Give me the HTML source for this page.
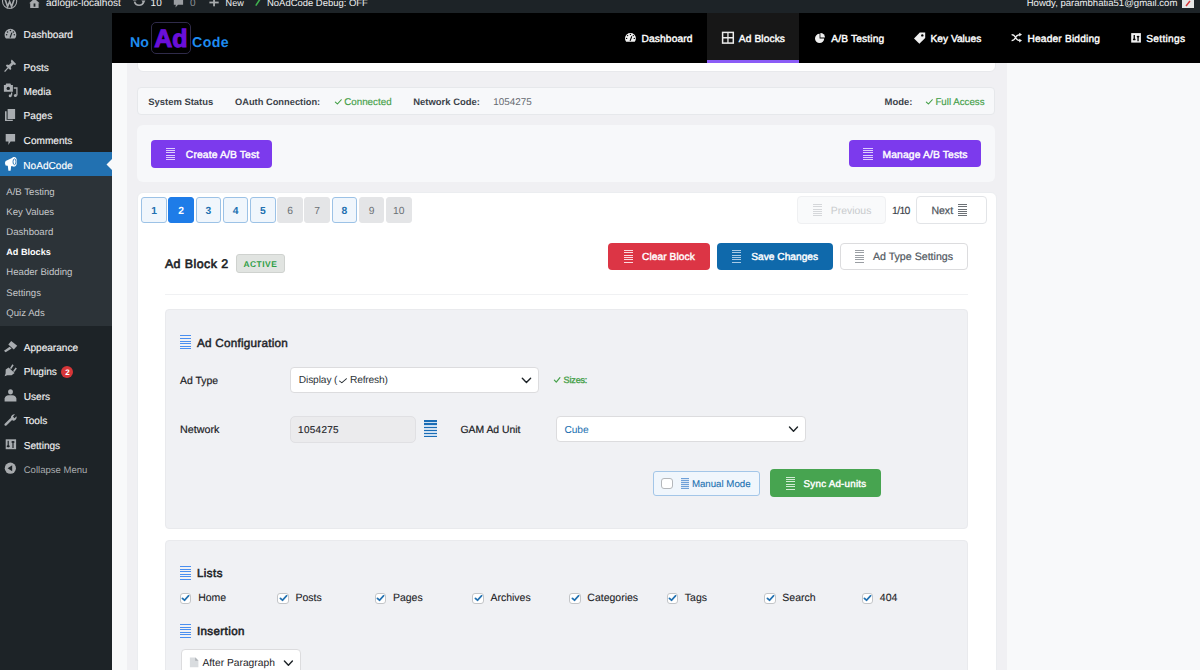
<!DOCTYPE html>
<html><head><meta charset="utf-8"><title>NoAdCode</title>
<style>
html,body{margin:0;padding:0;}
body{width:1200px;height:670px;overflow:hidden;position:relative;background:#f8f9fa;font-family:"Liberation Sans",sans-serif;}
.t{position:absolute;white-space:nowrap;line-height:1;text-rendering:geometricPrecision;}
.r{position:absolute;box-sizing:border-box;}
svg{position:absolute;overflow:visible;}
</style></head><body>

<div class="r" style="left:112.00px;top:63.00px;width:1088.00px;height:607.00px;background:#f8f9fa;"></div>
<div class="r" style="left:127.00px;top:63.00px;width:880.00px;height:607.00px;background:#f0f0f3;"></div>
<div class="r" style="left:0.00px;top:0.00px;width:1200.00px;height:13.00px;background:#1d2327;"></div>
<div class="t" style="left:46.00px;top:-1.20px;font-size:10.067px;color:#f0f0f1;">adlogic-localhost</div>
<div class="t" style="left:150.60px;top:-1.20px;font-size:10.06711409395973px;color:#f0f0f1;">10</div>
<div class="t" style="left:190.00px;top:-1.20px;font-size:10.06711409395973px;color:#8c8f94;">0</div>
<div class="t" style="left:225.60px;top:-1.20px;font-size:9.064px;color:#f0f0f1;">New</div>
<div class="t" style="left:267.00px;top:-1.21px;font-size:9.464px;color:#f0f0f1;">NoAdCode Debug: OFF</div>
<div class="t" style="left:1026.70px;top:-1.21px;font-size:9.555px;color:#f0f0f1;">Howdy, parambhatia51@gmail.com</div>
<div class="r" style="left:0.00px;top:13.00px;width:112.00px;height:657.00px;background:#1d2327;"></div>
<div class="t" style="left:23.60px;top:31.35px;font-size:10.1px;color:#f0f0f1;-webkit-text-stroke:0.15px #f0f0f1;">Dashboard</div>
<div class="t" style="left:23.60px;top:63.75px;font-size:10.1px;color:#f0f0f1;-webkit-text-stroke:0.15px #f0f0f1;">Posts</div>
<div class="t" style="left:23.60px;top:88.07px;font-size:10.1px;color:#f0f0f1;-webkit-text-stroke:0.15px #f0f0f1;">Media</div>
<div class="t" style="left:23.60px;top:112.35px;font-size:10.1px;color:#f0f0f1;-webkit-text-stroke:0.15px #f0f0f1;">Pages</div>
<div class="t" style="left:23.60px;top:136.65px;font-size:10.1px;color:#f0f0f1;-webkit-text-stroke:0.15px #f0f0f1;">Comments</div>
<div class="r" style="left:0.00px;top:152.20px;width:112.00px;height:23.60px;background:#2271b1;"></div>
<div class="t" style="left:23.30px;top:161.60px;font-size:10.1px;color:#fff;-webkit-text-stroke:0.15px #fff;">NoAdCode</div>
<div class="r" style="left:0.00px;top:175.80px;width:112.00px;height:149.80px;background:#2c3338;"></div>
<div class="t" style="left:6.30px;top:188.22px;font-size:9.6px;color:#c5c7ca;">A/B Testing</div>
<div class="t" style="left:6.30px;top:208.22px;font-size:9.6px;color:#c5c7ca;">Key Values</div>
<div class="t" style="left:6.30px;top:228.22px;font-size:9.6px;color:#c5c7ca;">Dashboard</div>
<div class="t" style="left:6.30px;top:248.30px;font-size:9.1px;color:#fff;font-weight:700;">Ad Blocks</div>
<div class="t" style="left:6.30px;top:268.40px;font-size:9.6px;color:#c5c7ca;">Header Bidding</div>
<div class="t" style="left:6.30px;top:288.50px;font-size:9.6px;color:#c5c7ca;">Settings</div>
<div class="t" style="left:6.30px;top:308.60px;font-size:9.6px;color:#c5c7ca;">Quiz Ads</div>
<div class="t" style="left:23.70px;top:343.75px;font-size:10.1px;color:#f0f0f1;-webkit-text-stroke:0.15px #f0f0f1;">Appearance</div>
<div class="t" style="left:23.70px;top:368.35px;font-size:10.1px;color:#f0f0f1;-webkit-text-stroke:0.15px #f0f0f1;">Plugins</div>
<div class="t" style="left:23.70px;top:393.07px;font-size:10.1px;color:#f0f0f1;-webkit-text-stroke:0.15px #f0f0f1;">Users</div>
<div class="t" style="left:23.70px;top:417.25px;font-size:10.1px;color:#f0f0f1;-webkit-text-stroke:0.15px #f0f0f1;">Tools</div>
<div class="t" style="left:23.70px;top:441.97px;font-size:10.1px;color:#f0f0f1;-webkit-text-stroke:0.15px #f0f0f1;">Settings</div>
<div class="t" style="left:23.70px;top:465.60px;font-size:9.55px;color:#a7aaad;">Collapse Menu</div>
<div class="r" style="left:61.3px;top:365.7px;width:12px;height:12px;border-radius:50%;background:#d63638;"></div>
<div class="t" style="left:65.20px;top:369.20px;font-size:8px;color:#fff;font-weight:700;">2</div>
<svg style="left:106px;top:158.5px" width="6" height="11"><path d="M6 0 L0.5 5.5 L6 11 Z" fill="#f8f9fa"/></svg>
<div class="r" style="left:137px;top:40px;width:859px;height:32px;background:#fff;border:1px solid #e8e9ec;border-radius:6px;"></div>
<div class="r" style="left:137.2px;top:87.1px;width:858.2px;height:28.1px;background:#f7f8fa;border:1px solid #e6e8eb;border-radius:4px;"></div>
<div class="t" style="left:148.30px;top:97.00px;font-size:9.431px;color:#3c434a;font-weight:700;">System Status</div>
<div class="t" style="left:235.00px;top:98.01px;font-size:9.318px;color:#3c434a;font-weight:700;">OAuth Connection:</div>
<svg style="left:334.50px;top:98.60px" width="6.70" height="5.80" viewBox="0 0 10 10" preserveAspectRatio="none"><path d="M0.6 5.4 L3.6 8.6 L9.4 1.2" fill="none" stroke="#45a049" stroke-width="1.79" stroke-linecap="round" stroke-linejoin="round"/></svg>
<div class="t" style="left:344.20px;top:98.00px;font-size:9.819px;color:#45a049;-webkit-text-stroke:0.15px #45a049;">Connected</div>
<div class="t" style="left:413.30px;top:98.00px;font-size:9.451px;color:#3c434a;font-weight:700;">Network Code:</div>
<div class="t" style="left:493.30px;top:98.00px;font-size:9.865px;color:#646970;">1054275</div>
<div class="t" style="left:884.60px;top:98.00px;font-size:9.474px;color:#3c434a;font-weight:700;">Mode:</div>
<svg style="left:925.50px;top:98.60px" width="6.70" height="5.80" viewBox="0 0 10 10" preserveAspectRatio="none"><path d="M0.6 5.4 L3.6 8.6 L9.4 1.2" fill="none" stroke="#45a049" stroke-width="1.79" stroke-linecap="round" stroke-linejoin="round"/></svg>
<div class="t" style="left:935.40px;top:98.00px;font-size:9.728px;color:#45a049;-webkit-text-stroke:0.15px #45a049;">Full Access</div>
<div class="r" style="left:137.2px;top:125.4px;width:858.2px;height:56.4px;background:#f7f8fa;border-radius:6px;"></div>
<div class="r" style="left:151.3px;top:140.3px;width:121.2px;height:27.4px;background:#7c3aed;border-radius:4px;"></div>
<div class="t" style="left:185.80px;top:150.60px;font-size:10.335px;color:#fff;-webkit-text-stroke:0.4px #fff;letter-spacing:0.127px;">Create A/B Test</div>
<div class="r" style="left:848.8px;top:140.4px;width:132.5px;height:27.1px;background:#7c3aed;border-radius:4px;"></div>
<div class="t" style="left:882.50px;top:150.60px;font-size:10.335px;color:#fff;-webkit-text-stroke:0.4px #fff;letter-spacing:0.125px;">Manage A/B Tests</div>
<div class="r" style="left:137px;top:192.3px;width:859.5px;height:600px;background:#fff;border:1px solid #ebedf0;border-radius:6px;"></div>
<div class="r" style="left:141.25px;top:197px;width:25.5px;height:25.5px;background:#f0f6fc;border:1px solid #9cc2e6;border-radius:3px;"></div>
<div class="t" style="left:151.13px;top:207.31px;font-size:10.3px;color:#2271b1;font-weight:700;">1</div>
<div class="r" style="left:168.45px;top:197px;width:25.5px;height:25.5px;background:#1e7ce8;border:1px solid #1e7ce8;border-radius:3px;"></div>
<div class="t" style="left:178.33px;top:207.31px;font-size:10.3px;color:#fff;font-weight:700;">2</div>
<div class="r" style="left:195.65px;top:197px;width:25.5px;height:25.5px;background:#f0f6fc;border:1px solid #9cc2e6;border-radius:3px;"></div>
<div class="t" style="left:205.53px;top:207.31px;font-size:10.3px;color:#2271b1;font-weight:700;">3</div>
<div class="r" style="left:222.85px;top:197px;width:25.5px;height:25.5px;background:#f0f6fc;border:1px solid #9cc2e6;border-radius:3px;"></div>
<div class="t" style="left:232.73px;top:207.31px;font-size:10.3px;color:#2271b1;font-weight:700;">4</div>
<div class="r" style="left:250.05px;top:197px;width:25.5px;height:25.5px;background:#f0f6fc;border:1px solid #9cc2e6;border-radius:3px;"></div>
<div class="t" style="left:259.94px;top:207.31px;font-size:10.3px;color:#2271b1;font-weight:700;">5</div>
<div class="r" style="left:277.25px;top:197px;width:25.5px;height:25.5px;background:#e4e5e7;border:1px solid #e4e5e7;border-radius:3px;"></div>
<div class="t" style="left:287.13px;top:207.31px;font-size:10.3px;color:#6b7075;">6</div>
<div class="r" style="left:304.45px;top:197px;width:25.5px;height:25.5px;background:#e4e5e7;border:1px solid #e4e5e7;border-radius:3px;"></div>
<div class="t" style="left:314.33px;top:207.31px;font-size:10.3px;color:#6b7075;">7</div>
<div class="r" style="left:331.65px;top:197px;width:25.5px;height:25.5px;background:#f0f6fc;border:1px solid #9cc2e6;border-radius:3px;"></div>
<div class="t" style="left:341.53px;top:207.31px;font-size:10.3px;color:#2271b1;font-weight:700;">8</div>
<div class="r" style="left:358.85px;top:197px;width:25.5px;height:25.5px;background:#e4e5e7;border:1px solid #e4e5e7;border-radius:3px;"></div>
<div class="t" style="left:368.74px;top:207.31px;font-size:10.3px;color:#6b7075;">9</div>
<div class="r" style="left:386.05px;top:197px;width:25.5px;height:25.5px;background:#e4e5e7;border:1px solid #e4e5e7;border-radius:3px;"></div>
<div class="t" style="left:393.07px;top:207.31px;font-size:10.3px;color:#6b7075;">10</div>
<div class="r" style="left:797.3px;top:196.1px;width:89.1px;height:27.6px;background:#f9fafb;border:1px solid #eff0f2;border-radius:4px;"></div>
<div class="t" style="left:830.80px;top:207.00px;font-size:10.437px;color:#c8cacd;">Previous</div>
<div class="t" style="left:892.00px;top:206.91px;font-size:10.475px;color:#3c434a;-webkit-text-stroke:0.15px #3c434a;letter-spacing:-0.667px;">1/10</div>
<div class="r" style="left:916.1px;top:196.1px;width:70.5px;height:27.6px;background:#fff;border:1px solid #e2e4e7;border-radius:4px;"></div>
<div class="t" style="left:931.40px;top:206.32px;font-size:10.560px;color:#50575e;-webkit-text-stroke:0.25px #50575e;">Next</div>
<div class="t" style="left:164.90px;top:258.21px;font-size:12.430px;color:#1d2327;-webkit-text-stroke:0.6px #1d2327;letter-spacing:0.432px;">Ad Block 2</div>
<div class="r" style="left:235.8px;top:253.8px;width:49.1px;height:19.5px;background:#e1e4e1;border:1px solid #cfd2cf;border-radius:3px;"></div>
<div class="t" style="left:243.50px;top:260.20px;font-size:8.398px;color:#2e9e45;font-weight:700;letter-spacing:0.500px;">ACTIVE</div>
<div class="r" style="left:608.1px;top:243px;width:101.8px;height:26.6px;background:#dc3545;border-radius:4px;"></div>
<div class="t" style="left:642.00px;top:253.10px;font-size:10.196px;color:#fff;-webkit-text-stroke:0.4px #fff;letter-spacing:0.075px;">Clear Block</div>
<div class="r" style="left:717.1px;top:243px;width:115.5px;height:26.6px;background:#0f69ab;border-radius:4px;"></div>
<div class="t" style="left:751.30px;top:253.10px;font-size:10.196px;color:#fff;-webkit-text-stroke:0.4px #fff;">Save Changes</div>
<div class="r" style="left:839.7px;top:243px;width:128.5px;height:26.6px;background:#fff;border:1px solid #dcdcde;border-radius:4px;"></div>
<div class="t" style="left:872.90px;top:252.01px;font-size:10.646px;color:#50575e;-webkit-text-stroke:0.2px #50575e;">Ad Type Settings</div>
<div class="r" style="left:165.00px;top:294.20px;width:803.20px;height:1.30px;background:#f0f1f3;"></div>
<div class="r" style="left:165px;top:309.4px;width:803.2px;height:220px;background:#f0f1f4;border:1px solid #e9eaed;border-radius:4px;"></div>
<div class="t" style="left:196.90px;top:337.51px;font-size:11.732px;color:#1d2327;-webkit-text-stroke:0.45px #1d2327;letter-spacing:0.247px;">Ad Configuration</div>
<div class="t" style="left:180.10px;top:376.51px;font-size:10.411px;color:#1d2327;-webkit-text-stroke:0.2px #1d2327;">Ad Type</div>
<div class="r" style="left:289.5px;top:366.7px;width:249.7px;height:26.3px;background:#fff;border:1px solid #dcdcde;border-radius:4px;"></div>
<div class="t" style="left:298.75px;top:376.41px;font-size:10.196px;color:#2c3338;letter-spacing:-0.114px;">Display (</div>
<svg style="left:339.20px;top:378.00px" width="7.90" height="5.60" viewBox="0 0 10 10" preserveAspectRatio="none"><path d="M0.6 5.4 L3.6 8.6 L9.4 1.2" fill="none" stroke="#2c3338" stroke-width="1.39" stroke-linecap="round" stroke-linejoin="round"/></svg>
<div class="t" style="left:350.00px;top:376.41px;font-size:10.196px;color:#2c3338;letter-spacing:-0.171px;">Refresh)</div>
<svg style="left:553.80px;top:376.90px" width="6.30" height="5.90" viewBox="0 0 10 10" preserveAspectRatio="none"><path d="M0.6 5.4 L3.6 8.6 L9.4 1.2" fill="none" stroke="#45a049" stroke-width="1.90" stroke-linecap="round" stroke-linejoin="round"/></svg>
<div class="t" style="left:563.60px;top:375.90px;font-size:9.078px;color:#45a049;-webkit-text-stroke:0.35px #45a049;letter-spacing:-0.183px;">Sizes:</div>
<div class="t" style="left:180.00px;top:425.20px;font-size:10.736px;color:#1d2327;-webkit-text-stroke:0.2px #1d2327;">Network</div>
<div class="r" style="left:289.5px;top:415.5px;width:126.7px;height:27px;background:#ebebed;border:1px solid #e0e0e3;border-radius:5px;"></div>
<div class="t" style="left:298.10px;top:426.41px;font-size:9.916px;color:#1d2327;-webkit-text-stroke:0.15px #1d2327;letter-spacing:0.317px;">1054275</div>
<div class="t" style="left:460.50px;top:426.22px;font-size:10.381px;color:#1d2327;-webkit-text-stroke:0.2px #1d2327;">GAM Ad Unit</div>
<div class="r" style="left:555.7px;top:415.7px;width:250.5px;height:26.7px;background:#fff;border:1px solid #dcdcde;border-radius:4px;"></div>
<div class="t" style="left:564.40px;top:426.41px;font-size:10.196px;color:#2271b1;letter-spacing:-0.022px;">Cube</div>
<div class="r" style="left:652.5px;top:470.5px;width:107.2px;height:25.5px;background:#f0f6fc;border:1px solid #a3c6e8;border-radius:3px;"></div>
<div class="r" style="left:661.1px;top:478px;width:12px;height:11px;background:#fff;border:1px solid #b4b7bb;border-radius:3px;"></div>
<div class="t" style="left:691.90px;top:480.31px;font-size:9.703px;color:#2271b1;-webkit-text-stroke:0.1px #2271b1;">Manual Mode</div>
<div class="r" style="left:770.2px;top:469.4px;width:111px;height:27.3px;background:#47a450;border-radius:4px;"></div>
<div class="t" style="left:803.60px;top:480.31px;font-size:9.777px;color:#fff;-webkit-text-stroke:0.4px #fff;letter-spacing:0.235px;">Sync Ad-units</div>
<div class="r" style="left:165px;top:540.1px;width:803.2px;height:200px;background:#f0f1f4;border:1px solid #e9eaed;border-radius:4px;"></div>
<div class="t" style="left:196.90px;top:569.00px;font-size:11.453px;color:#1d2327;-webkit-text-stroke:0.55px #1d2327;letter-spacing:0.491px;">Lists</div>
<div class="r" style="left:179.75px;top:593px;width:11.5px;height:11.25px;background:#fff;border:1px solid #c3c5c8;border-radius:3px;"></div>
<svg style="left:182.05px;top:595.30px" width="7.00" height="6.20" viewBox="0 0 10 10" preserveAspectRatio="none"><path d="M0.6 5.4 L3.6 8.6 L9.4 1.2" fill="none" stroke="#2271b1" stroke-width="2.57" stroke-linecap="round" stroke-linejoin="round"/></svg>
<div class="t" style="left:198.20px;top:593.41px;font-size:10.5px;color:#1d2327;-webkit-text-stroke:0.1px #1d2327;">Home</div>
<div class="r" style="left:277.25px;top:593px;width:11.5px;height:11.25px;background:#fff;border:1px solid #c3c5c8;border-radius:3px;"></div>
<svg style="left:279.55px;top:595.30px" width="7.00" height="6.20" viewBox="0 0 10 10" preserveAspectRatio="none"><path d="M0.6 5.4 L3.6 8.6 L9.4 1.2" fill="none" stroke="#2271b1" stroke-width="2.57" stroke-linecap="round" stroke-linejoin="round"/></svg>
<div class="t" style="left:295.40px;top:593.41px;font-size:10.5px;color:#1d2327;-webkit-text-stroke:0.1px #1d2327;">Posts</div>
<div class="r" style="left:374.75px;top:593px;width:11.5px;height:11.25px;background:#fff;border:1px solid #c3c5c8;border-radius:3px;"></div>
<svg style="left:377.05px;top:595.30px" width="7.00" height="6.20" viewBox="0 0 10 10" preserveAspectRatio="none"><path d="M0.6 5.4 L3.6 8.6 L9.4 1.2" fill="none" stroke="#2271b1" stroke-width="2.57" stroke-linecap="round" stroke-linejoin="round"/></svg>
<div class="t" style="left:392.90px;top:593.41px;font-size:10.5px;color:#1d2327;-webkit-text-stroke:0.1px #1d2327;">Pages</div>
<div class="r" style="left:472.25px;top:593px;width:11.5px;height:11.25px;background:#fff;border:1px solid #c3c5c8;border-radius:3px;"></div>
<svg style="left:474.55px;top:595.30px" width="7.00" height="6.20" viewBox="0 0 10 10" preserveAspectRatio="none"><path d="M0.6 5.4 L3.6 8.6 L9.4 1.2" fill="none" stroke="#2271b1" stroke-width="2.57" stroke-linecap="round" stroke-linejoin="round"/></svg>
<div class="t" style="left:490.40px;top:593.41px;font-size:10.5px;color:#1d2327;-webkit-text-stroke:0.1px #1d2327;">Archives</div>
<div class="r" style="left:569.40px;top:593px;width:11.5px;height:11.25px;background:#fff;border:1px solid #c3c5c8;border-radius:3px;"></div>
<svg style="left:571.70px;top:595.30px" width="7.00" height="6.20" viewBox="0 0 10 10" preserveAspectRatio="none"><path d="M0.6 5.4 L3.6 8.6 L9.4 1.2" fill="none" stroke="#2271b1" stroke-width="2.57" stroke-linecap="round" stroke-linejoin="round"/></svg>
<div class="t" style="left:587.30px;top:593.41px;font-size:10.5px;color:#1d2327;-webkit-text-stroke:0.1px #1d2327;">Categories</div>
<div class="r" style="left:666.90px;top:593px;width:11.5px;height:11.25px;background:#fff;border:1px solid #c3c5c8;border-radius:3px;"></div>
<svg style="left:669.20px;top:595.30px" width="7.00" height="6.20" viewBox="0 0 10 10" preserveAspectRatio="none"><path d="M0.6 5.4 L3.6 8.6 L9.4 1.2" fill="none" stroke="#2271b1" stroke-width="2.57" stroke-linecap="round" stroke-linejoin="round"/></svg>
<div class="t" style="left:684.80px;top:593.41px;font-size:10.5px;color:#1d2327;-webkit-text-stroke:0.1px #1d2327;">Tags</div>
<div class="r" style="left:764.40px;top:593px;width:11.5px;height:11.25px;background:#fff;border:1px solid #c3c5c8;border-radius:3px;"></div>
<svg style="left:766.70px;top:595.30px" width="7.00" height="6.20" viewBox="0 0 10 10" preserveAspectRatio="none"><path d="M0.6 5.4 L3.6 8.6 L9.4 1.2" fill="none" stroke="#2271b1" stroke-width="2.57" stroke-linecap="round" stroke-linejoin="round"/></svg>
<div class="t" style="left:782.30px;top:593.41px;font-size:10.5px;color:#1d2327;-webkit-text-stroke:0.1px #1d2327;">Search</div>
<div class="r" style="left:861.90px;top:593px;width:11.5px;height:11.25px;background:#fff;border:1px solid #c3c5c8;border-radius:3px;"></div>
<svg style="left:864.20px;top:595.30px" width="7.00" height="6.20" viewBox="0 0 10 10" preserveAspectRatio="none"><path d="M0.6 5.4 L3.6 8.6 L9.4 1.2" fill="none" stroke="#2271b1" stroke-width="2.57" stroke-linecap="round" stroke-linejoin="round"/></svg>
<div class="t" style="left:879.80px;top:593.41px;font-size:10.5px;color:#1d2327;-webkit-text-stroke:0.1px #1d2327;">404</div>
<div class="t" style="left:196.90px;top:626.90px;font-size:11.592px;color:#1d2327;-webkit-text-stroke:0.55px #1d2327;letter-spacing:0.393px;">Insertion</div>
<div class="r" style="left:180.7px;top:648.9px;width:120.4px;height:40px;background:#fff;border:1px solid #dcdcde;border-radius:4px;"></div>
<div class="t" style="left:202.40px;top:658.82px;font-size:10.283px;color:#1d2327;">After Paragraph</div>
<div class="r" style="left:166.00px;top:148.00px;width:9.00px;height:1.0px;background:rgba(240,232,255,0.85);"></div>
<div class="r" style="left:166.00px;top:150.24px;width:9.00px;height:1.0px;background:rgba(240,232,255,0.85);"></div>
<div class="r" style="left:166.00px;top:152.48px;width:9.00px;height:1.0px;background:rgba(240,232,255,0.85);"></div>
<div class="r" style="left:166.00px;top:154.72px;width:9.00px;height:1.0px;background:rgba(240,232,255,0.85);"></div>
<div class="r" style="left:166.00px;top:156.96px;width:9.00px;height:1.0px;background:rgba(240,232,255,0.85);"></div>
<div class="r" style="left:166.00px;top:159.20px;width:9.00px;height:1.0px;background:rgba(240,232,255,0.85);"></div>
<div class="r" style="left:862.50px;top:148.00px;width:10.50px;height:1.0px;background:rgba(240,232,255,0.85);"></div>
<div class="r" style="left:862.50px;top:150.24px;width:10.50px;height:1.0px;background:rgba(240,232,255,0.85);"></div>
<div class="r" style="left:862.50px;top:152.48px;width:10.50px;height:1.0px;background:rgba(240,232,255,0.85);"></div>
<div class="r" style="left:862.50px;top:154.72px;width:10.50px;height:1.0px;background:rgba(240,232,255,0.85);"></div>
<div class="r" style="left:862.50px;top:156.96px;width:10.50px;height:1.0px;background:rgba(240,232,255,0.85);"></div>
<div class="r" style="left:862.50px;top:159.20px;width:10.50px;height:1.0px;background:rgba(240,232,255,0.85);"></div>
<div class="r" style="left:812.60px;top:204.00px;width:9.60px;height:1.0px;background:#d5d7da;"></div>
<div class="r" style="left:812.60px;top:206.28px;width:9.60px;height:1.0px;background:#d5d7da;"></div>
<div class="r" style="left:812.60px;top:208.56px;width:9.60px;height:1.0px;background:#d5d7da;"></div>
<div class="r" style="left:812.60px;top:210.84px;width:9.60px;height:1.0px;background:#d5d7da;"></div>
<div class="r" style="left:812.60px;top:213.12px;width:9.60px;height:1.0px;background:#d5d7da;"></div>
<div class="r" style="left:812.60px;top:215.40px;width:9.60px;height:1.0px;background:#d5d7da;"></div>
<div class="r" style="left:957.90px;top:204.00px;width:9.40px;height:1.0px;background:#6b7075;"></div>
<div class="r" style="left:957.90px;top:206.28px;width:9.40px;height:1.0px;background:#6b7075;"></div>
<div class="r" style="left:957.90px;top:208.56px;width:9.40px;height:1.0px;background:#6b7075;"></div>
<div class="r" style="left:957.90px;top:210.84px;width:9.40px;height:1.0px;background:#6b7075;"></div>
<div class="r" style="left:957.90px;top:213.12px;width:9.40px;height:1.0px;background:#6b7075;"></div>
<div class="r" style="left:957.90px;top:215.40px;width:9.40px;height:1.0px;background:#6b7075;"></div>
<div class="r" style="left:623.70px;top:250.00px;width:9.00px;height:1.0px;background:rgba(255,235,238,0.9);"></div>
<div class="r" style="left:623.70px;top:252.34px;width:9.00px;height:1.0px;background:rgba(255,235,238,0.9);"></div>
<div class="r" style="left:623.70px;top:254.68px;width:9.00px;height:1.0px;background:rgba(255,235,238,0.9);"></div>
<div class="r" style="left:623.70px;top:257.02px;width:9.00px;height:1.0px;background:rgba(255,235,238,0.9);"></div>
<div class="r" style="left:623.70px;top:259.36px;width:9.00px;height:1.0px;background:rgba(255,235,238,0.9);"></div>
<div class="r" style="left:623.70px;top:261.70px;width:9.00px;height:1.0px;background:rgba(255,235,238,0.9);"></div>
<div class="r" style="left:731.80px;top:250.00px;width:9.50px;height:1.0px;background:rgba(220,235,250,0.75);"></div>
<div class="r" style="left:731.80px;top:252.34px;width:9.50px;height:1.0px;background:rgba(220,235,250,0.75);"></div>
<div class="r" style="left:731.80px;top:254.68px;width:9.50px;height:1.0px;background:rgba(220,235,250,0.75);"></div>
<div class="r" style="left:731.80px;top:257.02px;width:9.50px;height:1.0px;background:rgba(220,235,250,0.75);"></div>
<div class="r" style="left:731.80px;top:259.36px;width:9.50px;height:1.0px;background:rgba(220,235,250,0.75);"></div>
<div class="r" style="left:731.80px;top:261.70px;width:9.50px;height:1.0px;background:rgba(220,235,250,0.75);"></div>
<div class="r" style="left:854.80px;top:250.00px;width:9.50px;height:1.0px;background:#9a9ea3;"></div>
<div class="r" style="left:854.80px;top:252.34px;width:9.50px;height:1.0px;background:#9a9ea3;"></div>
<div class="r" style="left:854.80px;top:254.68px;width:9.50px;height:1.0px;background:#9a9ea3;"></div>
<div class="r" style="left:854.80px;top:257.02px;width:9.50px;height:1.0px;background:#9a9ea3;"></div>
<div class="r" style="left:854.80px;top:259.36px;width:9.50px;height:1.0px;background:#9a9ea3;"></div>
<div class="r" style="left:854.80px;top:261.70px;width:9.50px;height:1.0px;background:#9a9ea3;"></div>
<div class="r" style="left:180.00px;top:335.40px;width:10.50px;height:1.1px;background:#4a8ff0;"></div>
<div class="r" style="left:180.00px;top:337.96px;width:10.50px;height:1.1px;background:#4a8ff0;"></div>
<div class="r" style="left:180.00px;top:340.52px;width:10.50px;height:1.1px;background:#4a8ff0;"></div>
<div class="r" style="left:180.00px;top:343.08px;width:10.50px;height:1.1px;background:#4a8ff0;"></div>
<div class="r" style="left:180.00px;top:345.64px;width:10.50px;height:1.1px;background:#4a8ff0;"></div>
<div class="r" style="left:180.00px;top:348.20px;width:10.50px;height:1.1px;background:#4a8ff0;"></div>
<div class="r" style="left:423.90px;top:420.40px;width:13.30px;height:16.90px;background:#cfe0f1;"></div>
<div class="r" style="left:423.90px;top:420.40px;width:13.30px;height:1.6px;background:#1a6db5;"></div>
<div class="r" style="left:423.90px;top:423.46px;width:13.30px;height:1.6px;background:#1a6db5;"></div>
<div class="r" style="left:423.90px;top:426.52px;width:13.30px;height:1.6px;background:#1a6db5;"></div>
<div class="r" style="left:423.90px;top:429.58px;width:13.30px;height:1.6px;background:#1a6db5;"></div>
<div class="r" style="left:423.90px;top:432.64px;width:13.30px;height:1.6px;background:#1a6db5;"></div>
<div class="r" style="left:423.90px;top:435.70px;width:13.30px;height:1.6px;background:#1a6db5;"></div>
<div class="r" style="left:680.60px;top:477.60px;width:8.30px;height:11.60px;background:#dbe7f5;"></div>
<div class="r" style="left:680.60px;top:477.60px;width:8.30px;height:1.0px;background:#6fa0d8;"></div>
<div class="r" style="left:680.60px;top:479.72px;width:8.30px;height:1.0px;background:#6fa0d8;"></div>
<div class="r" style="left:680.60px;top:481.84px;width:8.30px;height:1.0px;background:#6fa0d8;"></div>
<div class="r" style="left:680.60px;top:483.96px;width:8.30px;height:1.0px;background:#6fa0d8;"></div>
<div class="r" style="left:680.60px;top:486.08px;width:8.30px;height:1.0px;background:#6fa0d8;"></div>
<div class="r" style="left:680.60px;top:488.20px;width:8.30px;height:1.0px;background:#6fa0d8;"></div>
<div class="r" style="left:785.60px;top:476.50px;width:9.40px;height:1.0px;background:rgba(235,250,235,0.85);"></div>
<div class="r" style="left:785.60px;top:478.90px;width:9.40px;height:1.0px;background:rgba(235,250,235,0.85);"></div>
<div class="r" style="left:785.60px;top:481.30px;width:9.40px;height:1.0px;background:rgba(235,250,235,0.85);"></div>
<div class="r" style="left:785.60px;top:483.70px;width:9.40px;height:1.0px;background:rgba(235,250,235,0.85);"></div>
<div class="r" style="left:785.60px;top:486.10px;width:9.40px;height:1.0px;background:rgba(235,250,235,0.85);"></div>
<div class="r" style="left:785.60px;top:488.50px;width:9.40px;height:1.0px;background:rgba(235,250,235,0.85);"></div>
<div class="r" style="left:180.00px;top:566.00px;width:10.50px;height:1.1px;background:#4a8ff0;"></div>
<div class="r" style="left:180.00px;top:568.50px;width:10.50px;height:1.1px;background:#4a8ff0;"></div>
<div class="r" style="left:180.00px;top:571.00px;width:10.50px;height:1.1px;background:#4a8ff0;"></div>
<div class="r" style="left:180.00px;top:573.50px;width:10.50px;height:1.1px;background:#4a8ff0;"></div>
<div class="r" style="left:180.00px;top:576.00px;width:10.50px;height:1.1px;background:#4a8ff0;"></div>
<div class="r" style="left:180.00px;top:578.50px;width:10.50px;height:1.1px;background:#4a8ff0;"></div>
<div class="r" style="left:180.00px;top:624.20px;width:10.50px;height:1.1px;background:#4a8ff0;"></div>
<div class="r" style="left:180.00px;top:626.70px;width:10.50px;height:1.1px;background:#4a8ff0;"></div>
<div class="r" style="left:180.00px;top:629.20px;width:10.50px;height:1.1px;background:#4a8ff0;"></div>
<div class="r" style="left:180.00px;top:631.70px;width:10.50px;height:1.1px;background:#4a8ff0;"></div>
<div class="r" style="left:180.00px;top:634.20px;width:10.50px;height:1.1px;background:#4a8ff0;"></div>
<div class="r" style="left:180.00px;top:636.70px;width:10.50px;height:1.1px;background:#4a8ff0;"></div>
<svg style="left:0;top:0" width="1200" height="670"><path d="M522.3 378.2 L526.45 382.4 L530.6 378.2" fill="none" stroke="#1d2327" stroke-width="1.4" stroke-linecap="round" stroke-linejoin="round"/></svg>
<svg style="left:0;top:0" width="1200" height="670"><path d="M789.5 427.0 L793.5 431.2 L797.5 427.0" fill="none" stroke="#1d2327" stroke-width="1.4" stroke-linecap="round" stroke-linejoin="round"/></svg>
<svg style="left:0;top:0" width="1200" height="670"><path d="M284.4 660.9 L288.4 665.2 L292.4 660.9" fill="none" stroke="#1d2327" stroke-width="1.4" stroke-linecap="round" stroke-linejoin="round"/></svg>
<svg style="left:0;top:0" width="1200" height="670"><path d="M189.9 657.5 L195.6 657.5 L198.4 660.3 L198.4 667.2 L189.9 667.2 Z" fill="#d9dcdf"/><path d="M195.2 657.5 L195.2 660.7 L198.4 660.7" fill="#aeb2b6"/></svg>
<div class="r" style="left:112.00px;top:13.00px;width:1088.00px;height:50.00px;background:#000;"></div>
<div class="t" style="left:130.00px;top:36.00px;font-size:14.2px;color:#1e8cf0;font-weight:700;">No</div>
<div class="r" style="left:151px;top:22px;width:40px;height:32px;border:1px solid #2f2b4a;border-radius:5px;"></div>
<div class="t" style="left:154.30px;top:27.31px;font-size:25.0px;color:#6a0fd9;font-weight:700;letter-spacing:0px;-webkit-text-stroke:1.1px #6a0fd9;">Ad</div>
<div class="t" style="left:192.00px;top:36.00px;font-size:14.2px;color:#1e8cf0;font-weight:700;letter-spacing:0.4px;">Code</div>
<div class="r" style="left:707.00px;top:13.00px;width:92.30px;height:50.00px;background:#171717;"></div>
<div class="r" style="left:707.00px;top:60.30px;width:92.30px;height:2.70px;background:#8b5cf6;"></div>
<div class="t" style="left:641.50px;top:34.81px;font-size:10.196px;color:#fff;-webkit-text-stroke:0.4px #fff;letter-spacing:0.140px;">Dashboard</div>
<div class="t" style="left:738.80px;top:34.81px;font-size:10.196px;color:#fff;-webkit-text-stroke:0.4px #fff;letter-spacing:0.107px;">Ad Blocks</div>
<div class="t" style="left:831.30px;top:34.81px;font-size:10.196px;color:#fff;-webkit-text-stroke:0.4px #fff;letter-spacing:0.161px;">A/B Testing</div>
<div class="t" style="left:930.50px;top:34.81px;font-size:10.196px;color:#fff;-webkit-text-stroke:0.4px #fff;">Key Values</div>
<div class="t" style="left:1027.50px;top:34.81px;font-size:10.196px;color:#fff;-webkit-text-stroke:0.4px #fff;letter-spacing:0.169px;">Header Bidding</div>
<div class="t" style="left:1146.30px;top:34.81px;font-size:10.196px;color:#fff;-webkit-text-stroke:0.4px #fff;letter-spacing:0.267px;">Settings</div>
<svg style="left:0;top:0" width="1200" height="670" viewBox="0 0 1200 670">
<g fill="#a7aaad">
 <!-- admin bar WP logo -->
 <circle cx="9.6" cy="1.3" r="7.1" fill="none" stroke="#a7aaad" stroke-width="1.1"/>
 <path d="M4.8 -1.5 L7.6 6.6 L9.6 1.5 L11.6 6.6 L14.4 -1.5" fill="none" stroke="#a7aaad" stroke-width="1.6"/>
 <!-- home -->
 <path d="M29.2 3.2 L34.4 -1.5 L39.6 3.2 L38.6 3.2 L38.6 7.9 L30.2 7.9 L30.2 3.2 Z"/>
 <rect x="33.6" y="3.5" width="1.8" height="3.2" fill="#1d2327"/>
 <!-- updates -->
 <path d="M134.6 1.6 A4.6 4.6 0 0 0 143.6 1.6" fill="none" stroke="#a7aaad" stroke-width="1.7"/>
 <path d="M141.4 0.6 L145.4 0.6 L143.6 3.8 Z"/>
 <path d="M132.8 0.6 L136.6 0.6 L134.7 -2.4 Z"/>
 <!-- comments -->
 <path d="M173.8 -1 L183.1 -1 L183.1 4.8 L178 4.8 L175.5 7.5 L175.8 4.8 L173.8 4.8 Z" fill="#9a9da1"/>
 <!-- plus -->
 <rect x="209.4" y="1.6" width="9.3" height="1.8"/>
 <rect x="213.15" y="-2" width="1.8" height="8.3"/>
 <!-- pencil -->
 <path d="M255.8 5.6 L259.8 -0.5" stroke="#3fb24f" stroke-width="1.6"/>
 <!-- avatar -->
 <rect x="1182" y="-2" width="12" height="10" fill="#e6e6e6"/>
 <path d="M1186 6 L1190 1" stroke="#d63638" stroke-width="1.5"/>
</g>
<g fill="#a9adb1">
 <!-- sidebar dashboard gauge -->
 <path d="M6.0 38.6 A5.9 5.9 0 1 1 14.9 38.6 Z"/>
 <g fill="#1d2327"><circle cx="10.45" cy="30.6" r="0.75"/><circle cx="7.5" cy="31.9" r="0.75"/><circle cx="13.4" cy="31.9" r="0.75"/><circle cx="6.6" cy="34.8" r="0.75"/><circle cx="14.3" cy="34.8" r="0.75"/></g>
 <path d="M10.1 37.6 L11.9 32.6" stroke="#1d2327" stroke-width="1.2"/>
 <!-- pin -->
 <path d="M11.8 59.6 L16.1 63.9 L15.0 65.0 L13.2 64.6 L10.8 67.0 L11.3 69.0 L10.2 70.1 L5.8 65.7 L6.9 64.6 L8.9 65.1 L11.3 62.7 L10.9 60.9 Z"/>
 <path d="M8.2 67.6 L4.6 71.6" stroke="#a9adb1" stroke-width="1.3"/>
 <!-- media -->
 <path d="M3.9 85.0 L5.6 85.0 L6.2 83.6 L10.4 83.6 L11.0 85.0 L12.9 85.0 L12.9 91.8 L3.9 91.8 Z"/>
 <circle cx="8.3" cy="88.4" r="1.7" fill="#1d2327"/>
 <path d="M13.8 88.0 L16.9 88.0 L16.9 95.6" fill="none" stroke="#a9adb1" stroke-width="1.3"/>
 <path d="M11.6 92.6 L11.6 95.6" fill="none" stroke="#a9adb1" stroke-width="1.2"/>
 <circle cx="15.4" cy="95.6" r="1.5"/><circle cx="10.2" cy="95.8" r="1.5"/>
 <!-- pages -->
 <path d="M5.0 111.2 L6.6 111.2 L6.6 119.8 L12.8 119.8 L12.8 120.9 L5.0 120.9 Z"/>
 <rect x="7.6" y="109.0" width="7.5" height="10.0"/>
 <!-- comments -->
 <path d="M5.7 134.0 L15.1 134.0 L15.1 141.4 L10.6 141.4 L8.3 145.1 L8.5 141.4 L5.7 141.4 Z"/>
 <!-- appearance brush -->
 <path d="M11.2 341.0 L17.2 345.8 L13.8 349.6 L8.3 344.6 Z"/>
 <path d="M9.6 346.8 L11.6 348.6 L5.6 352.2 L4.0 350.8 Z"/>
 <!-- plugins -->
 <path d="M8.6 367.6 L14.6 373.0 L11.6 375.2 L7.2 375.2 L4.6 376.3 L5.6 373.6 L5.7 369.4 Z"/>
 <path d="M10.6 368.6 L13.0 364.8" stroke="#a9adb1" stroke-width="1.6"/>
 <path d="M13.6 371.6 L16.2 368.0" stroke="#a9adb1" stroke-width="1.6"/>
 <!-- users -->
 <ellipse cx="10.5" cy="391.8" rx="2.4" ry="2.6"/>
 <path d="M4.6 401.4 L4.6 398.6 Q5.2 395.4 8.6 395.2 L12.4 395.2 Q15.8 395.4 16.4 398.6 L16.4 401.4 Z"/>
 <!-- tools wrench -->
 <path d="M5.6 424.6 L11.2 419.2" stroke="#a9adb1" stroke-width="2.4" stroke-linecap="round"/>
 <path d="M10.8 417.6 A3.6 3.6 0 0 1 15.0 414.3 L13.0 416.6 L14.4 418.2 L16.6 416.2 A3.6 3.6 0 0 1 12.6 420.6 Z"/>
 <!-- settings -->
 <rect x="5.7" y="439.3" width="10.4" height="9.9"/>
 <g fill="#1d2327"><rect x="7.6" y="440.8" width="1.2" height="6.4"/><ellipse cx="8.2" cy="446.2" rx="1.6" ry="1.0"/><rect x="12.4" y="442.4" width="1.2" height="5.6"/><ellipse cx="13.0" cy="441.9" rx="1.6" ry="1.0"/></g>
 <!-- collapse -->
 <circle cx="10.35" cy="468.2" r="5.6" fill="#a7aaad"/>
 <path d="M7.6 468.2 L12.2 465.2 L12.2 471.2 Z" fill="#1d2327"/>
</g>
<!-- megaphone -->
<g fill="#fff">
 <path d="M5.6 161.0 L13.6 157.3 L14.4 166.4 L5.6 165.4 Q4.0 163.2 5.6 161.0 Z"/>
 <path d="M7.6 164.6 L11.2 165.4 L10.6 170.7 L8.4 170.7 Z"/>
 <ellipse cx="14.2" cy="161.8" rx="2.7" ry="4.8"/>
 <ellipse cx="14.5" cy="161.8" rx="1.5" ry="2.9" fill="#fff" stroke="#2271b1" stroke-width="0.9"/>
</g>
<!-- header nav icons -->
<g fill="#f0f0f0">
 <path d="M626.15 41.8 A5.45 5.45 0 1 1 634.75 41.8 Z"/>
 <g fill="#000"><circle cx="630.45" cy="34.4" r="0.7"/><circle cx="627.6" cy="35.6" r="0.7"/><circle cx="633.3" cy="35.6" r="0.7"/><circle cx="626.6" cy="38.4" r="0.7"/><circle cx="634.3" cy="38.4" r="0.7"/></g>
 <path d="M630.1 40.9 L631.8 36.2" stroke="#000" stroke-width="1.1"/>
 <rect x="722.6" y="32.4" width="10.7" height="10.7" fill="none" stroke="#ececec" stroke-width="1.5"/>
 <path d="M727.95 32.4 L727.95 43.1 M722.6 37.75 L733.3 37.75" stroke="#ececec" stroke-width="1.3"/>
 <path d="M819.6 38.4 L819.6 33.8 A4.6 4.6 0 1 0 824.2 38.4 Z"/>
 <path d="M820.4 37.6 L820.4 33.0 A4.6 4.6 0 0 1 825.0 37.6 Z"/>
 <path d="M914.0 38.4 L919.8 32.6 L925.2 32.5 L925.2 37.9 L919.4 43.8 Z"/>
 <circle cx="922.3" cy="35.4" r="1.2" fill="#000"/>
 <path d="M1011.6 34.6 Q1014.2 34.6 1015.6 37.6 Q1017.0 40.6 1019.8 40.6 M1011.6 40.6 Q1014.2 40.6 1015.6 37.6 Q1017.0 34.6 1019.8 34.6" fill="none" stroke="#f0f0f0" stroke-width="1.3"/>
 <path d="M1019.2 32.8 L1022.0 34.6 L1019.2 36.4 Z M1019.2 38.8 L1022.0 40.6 L1019.2 42.4 Z"/>
 <rect x="1131.2" y="33.1" width="9.7" height="9.5"/>
 <g fill="#000"><rect x="1133.6" y="35.0" width="1.3" height="4.6"/><ellipse cx="1134.25" cy="39.4" rx="1.4" ry="0.9"/><rect x="1137.4" y="37.0" width="1.3" height="4.2"/><ellipse cx="1138.05" cy="36.6" rx="1.4" ry="0.9"/></g>
</g>
</svg>
</body></html>
